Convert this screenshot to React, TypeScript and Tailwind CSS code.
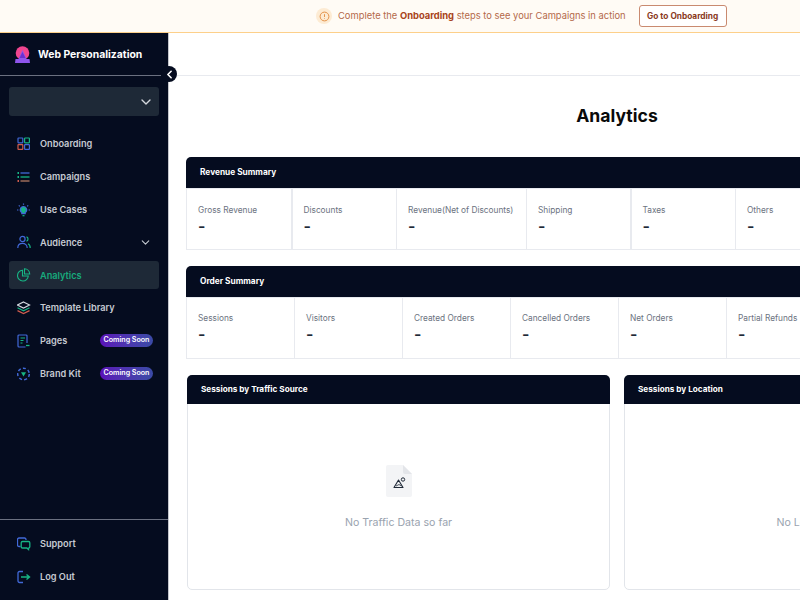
import React from "react";
import { ChevronDown, ChevronLeft } from "lucide-react";

const B = "#4169d8", G = "#17b585", R = "#cf5c4e";

const icons: Record<string, React.ReactNode> = {
  Onboarding: (<>
    <rect x="1" y="1" width="4.800" height="4.800" rx="0.5" stroke={B} /><rect x="7.600" y="1" width="4.800" height="4.800" rx="0.5" stroke={G} />
    <rect x="1" y="7.600" width="4.800" height="4.800" rx="0.5" stroke={R} /><rect x="7.600" y="7.600" width="4.800" height="4.800" rx="0.5" stroke={B} />
  </>),
  Campaigns: (<>
    <path d="M.5 3h1.500M.5 7h1.500" stroke={G} strokeWidth="1.800" /><path d="M.5 11h1.500" stroke={R} strokeWidth="1.800" />
    <path d="M3.500 3h9" stroke={B} strokeWidth="1.300" /><path d="M3.500 7h9" stroke={G} strokeWidth="1.300" /><path d="M3.500 11h9" stroke="#b57a62" strokeWidth="1.300" />
  </>),
  "Use Cases": (<>
    <path d="M6.500 3.500a3.200 3.200 0 0 0-1.700 5.900v1.300h3.400V9.400A3.200 3.200 0 0 0 6.500 3.500Z" stroke={B} fill={G} />
    <path d="M5.500 12.700h2" stroke={G} /><path d="M6.500 .4v1.400M1.800 2.300l1 1M11.200 2.300l-1 1M0 7h1.400M11.600 7h1.400" stroke={B} />
  </>),
  Audience: (<>
    <circle cx="5.500" cy="4" r="2.600" stroke={B} /><path d="M.8 13c0-3 2-4.600 4.700-4.600s4.700 1.600 4.700 4.600" stroke={B} />
    <path d="M9.500 1.700a2.500 2.500 0 0 1 0 4.600M11 8.800c1.400.6 2.200 2.100 2.200 4.200" stroke={G} />
  </>),
  Analytics: (<>
    <path d="M5.500 2.200a5.400 5.400 0 1 0 5.800 5.800H5.500Z" stroke={G} strokeWidth="1.100" /><path d="M7.500 .8A5.400 5.400 0 0 1 12.700 6H7.500Z" stroke={G} strokeWidth="1.100" />
  </>),
  "Template Library": (<>
    <path d="M6.500 1 12.500 4 6.500 7 .5 4Z" stroke="#d4d8e0" /><path d="M.5 6.800 6.500 9.800l6-3" stroke={G} /><path d="M.5 9.600l6 3 6-3" stroke={R} />
  </>),
  Pages: (<>
    <path d="M10 9V2a1 1 0 0 0-1-1H2a1 1 0 0 0-1 1v10a1 1 0 0 0 1 1H8.500" stroke={B} />
    <path d="M3.500 4h4.500M3.500 6.500h3M3.500 9h2" stroke={G} /><path d="M9 11.500h3.500" stroke={G} strokeWidth="1.300" />
  </>),
  "Brand Kit": (<>
    <circle cx="6.500" cy="7" r="5.800" stroke={B} strokeWidth="1.500" strokeDasharray="3 2.200" />
    <path d="M4 5.200h5L6.500 9.500Z" fill={G} />
  </>),
  Support: (<>
    <path d="M9 3V2.500a1.500 1.500 0 0 0-1.500-1.500H2A1.500 1.500 0 0 0 .5 2.500V8A1.500 1.500 0 0 0 2 9.500H3.500" stroke={B} strokeWidth="1.300" />
    <path d="M5.500 4.500h6a1.300 1.300 0 0 1 1.300 1.300v4a1.300 1.300 0 0 1-1.300 1.300v1.400L9.800 11H5.500a1.300 1.300 0 0 1-1.300-1.300v-4A1.300 1.300 0 0 1 5.500 4.500Z" stroke={G} strokeWidth="1.300" />
  </>),
  "Log Out": (<>
    <path d="M6 1.500H2.500A1.500 1.500 0 0 0 1 3v8A1.500 1.500 0 0 0 2.500 12.500H6" stroke={B} strokeWidth="1.300" />
    <path d="M4 7H12M9.500 4.500 12.500 7l-3 2.500" stroke={G} strokeWidth="1.400" />
  </>),
};

function Icon({ name }: { name: string }) {
  return (
    <svg width="14" height="14" viewBox="0 0 14 14" fill="none" strokeWidth="1.200" className="shrink-0">
      {icons[name]}
    </svg>
  );
}

function NavItem({ name, active, badge, chevron }: { name: string; active?: boolean; badge?: boolean; chevron?: boolean }) {
  return (
    <div className={`flex h-[28px] items-center rounded-[3px] pl-[8px] pr-[6px] ${active ? "bg-[#1e2937]" : ""}`}>
      <Icon name={name} />
      <span className={`ml-[9px] text-[9.200px] font-semibold leading-none ${active ? "text-[#17a97c]" : "text-[#c6cad2]"}`}>{name}</span>
      {badge && (
        <span className="ml-auto flex h-[13px] w-[53px] items-center justify-center whitespace-nowrap rounded-full bg-gradient-to-r from-[#5a10b8] to-[#3a4aa6] text-[7.100px] font-semibold text-white">
          Coming Soon
        </span>
      )}
      {chevron && <ChevronDown size={13} strokeWidth={2} className="ml-auto mr-[1px] text-[#c6cad2]" />}
    </div>
  );
}

function Stat({ label, w, top }: { label: string; w: string; top: string }) {
  return (
    <div className={`${w} ${top} h-full shrink-0 bg-white pl-[11px]`}>
      <div className="whitespace-nowrap text-[8.300px] leading-[12px] text-[#6b7280]">{label}</div>
      <div className="text-[16px] font-semibold leading-[20px] text-[#1f2937]">-</div>
    </div>
  );
}

function Summary({ title, stats, top }: { title: string; stats: [string, string][]; top: string }) {
  return (
    <section className="w-[862px]">
      <div className="flex h-[31px] items-center rounded-t-[5px] bg-[#050c1f] pl-[14px] text-[8.300px] font-bold text-white">{title}</div>
      <div className="flex h-[62px] gap-[1.500px] border-b border-[#e8eaef] bg-[#e8eaef] pl-px pt-px">
        {stats.map(([l, w]) => <Stat key={l} label={l} w={w} top={top} />)}
      </div>
    </section>
  );
}

function ChartCard({ title, empty, w }: { title: string; empty: string; w: string }) {
  return (
    <section className={`${w} flex h-[215px] shrink-0 flex-col rounded-[5px] border border-[#e2e5ea]`}>
      <div className="-mx-px -mt-px flex h-[29px] items-center rounded-t-[5px] bg-[#050c1f] pl-[14px] text-[8.200px] font-bold text-white">{title}</div>
      <div className="flex flex-1 flex-col items-center pt-[61px]">
        <svg width="26" height="32" viewBox="0 0 26 32" fill="none">
          <path d="M2 0h15l9 9v21a2 2 0 0 1-2 2H2a2 2 0 0 1-2-2V2a2 2 0 0 1 2-2Z" fill="#f3f4f6" />
          <path d="M17 0l9 9h-7a2 2 0 0 1-2-2Z" fill="#e3e5e9" />
          <path d="M8 22.500 12.500 15l4.500 7.500Z" stroke="#1f2937" strokeWidth="1.100" strokeLinejoin="round" />
          <path d="M10 21l3-1.500 2.500 1.500" stroke="#1f2937" strokeWidth="0.800" />
          <circle cx="17" cy="14.500" r="1.700" stroke="#1f2937" strokeWidth="1" />
        </svg>
        <div className="mt-[19px] whitespace-nowrap text-[10.600px] leading-[14px] text-[#9aa3af]">{empty}</div>
      </div>
    </section>
  );
}

export default function App() {
  return (
    <div className="flex h-[600px] w-[800px] flex-col overflow-hidden bg-white font-['Inter',sans-serif]">
      <header className="flex h-[33px] shrink-0 items-center border-b border-[#fdd08a] bg-[#fffbf5] pl-[316px]">
        <span className="flex h-[16px] w-[16px] items-center justify-center rounded-full bg-[#fdebd3]">
          <svg width="11" height="11" viewBox="0 0 12 12" fill="none">
            <circle cx="6" cy="6" r="4.800" stroke="#e08a3c" />
            <path d="M6 3.500v3M6 8v.600" stroke="#e08a3c" />
          </svg>
        </span>
        <p className="ml-[6px] whitespace-nowrap text-[9.400px] text-[#b4694a]">
          Complete the <b className="font-bold text-[#a8431a]">Onboarding</b> steps to see your Campaigns in action
        </p>
        <button className="ml-[13px] flex h-[22px] w-[88px] items-center justify-center rounded-[3px] border border-[#c98a70] bg-white text-[8.300px] font-bold text-[#8a3a1e]">
          Go to Onboarding
        </button>
      </header>
      <div className="flex min-h-0 flex-1">
        <aside className="relative flex w-[169px] shrink-0 flex-col border-r border-[#c4c6cb] bg-[#050c1f]">
          <div className="mr-[7px] flex h-[43px] shrink-0 items-center border-b border-[#6b7080] pl-[15px] pt-[2px]">
            <svg width="15" height="18" viewBox="0 0 15 18" fill="none">
              <circle cx="7.500" cy="7" r="6.800" fill="#f0458f" />
              <path d="M7.500 4 11.500 13H14.500L15 17H0l.500-4H3.500Z" fill="#8f55ec" />
              <path d="M7.500 6 10.500 12H4.500Z" fill="#6a2fd0" />
            </svg>
            <span className="ml-[8px] whitespace-nowrap text-[10.400px] font-bold text-white">Web Personalization</span>
          </div>
          <div className="mx-[9px] mt-[11px] flex h-[29px] items-center justify-end rounded-[3px] bg-[#1e2937] pr-[5px]">
            <ChevronDown size={16} strokeWidth={2} className="text-[#d5d8de]" />
          </div>
          <nav className="mx-[9px] mt-[14px] flex flex-col gap-[4.800px]">
            <NavItem name="Onboarding" />
            <NavItem name="Campaigns" />
            <NavItem name="Use Cases" />
            <NavItem name="Audience" chevron />
            <NavItem name="Analytics" active />
            <NavItem name="Template Library" />
            <NavItem name="Pages" badge />
            <NavItem name="Brand Kit" badge />
          </nav>
          <div className="mt-auto border-t border-[#6b7080] px-[9px] pb-[9px] pt-[10px]">
            <div className="flex flex-col gap-[5px]">
              <NavItem name="Support" />
              <NavItem name="Log Out" />
            </div>
          </div>
          <span className="absolute right-[-9px] top-[33px] flex h-[16px] w-[16px] items-center justify-center rounded-full bg-[#050c1f]">
            <ChevronLeft size={13} strokeWidth={3} className="text-white" />
          </span>
        </aside>
        <main className="w-[896px] shrink-0">
          <div className="h-[43px] border-b border-[#e8eaef]" />
          <h1 className="mt-[28px] text-center text-[17.600px] font-bold leading-[24px] text-[#0a0a0a]">Analytics</h1>
          <div className="mt-[29px] flex flex-col gap-[16px] pl-[17px]">
            <Summary title="Revenue Summary" top="pt-[15px]" stats={[
              ["Gross Revenue", "w-[104px]"], ["Discounts", "w-[103px]"], ["Revenue(Net of Discounts)", "w-[128.500px]"],
              ["Shipping", "w-[103px]"], ["Taxes", "w-[103px]"], ["Others", "w-[103px]"],
            ]} />
            <Summary title="Order Summary" top="pt-[14px]" stats={[
              ["Sessions", "w-[106.500px]"], ["Visitors", "w-[106.500px]"], ["Created Orders", "w-[106.500px]"],
              ["Cancelled Orders", "w-[106.500px]"], ["Net Orders", "w-[106.500px]"], ["Partial Refunds", "w-[106.500px]"],
            ]} />
            <div className="flex gap-[14px] pl-px">
              <ChartCard w="w-[423px]" title="Sessions by Traffic Source" empty="No Traffic Data so far" />
              <ChartCard w="w-[423px]" title="Sessions by Location" empty="No Location Data so far" />
            </div>
          </div>
        </main>
      </div>
    </div>
  );
}
